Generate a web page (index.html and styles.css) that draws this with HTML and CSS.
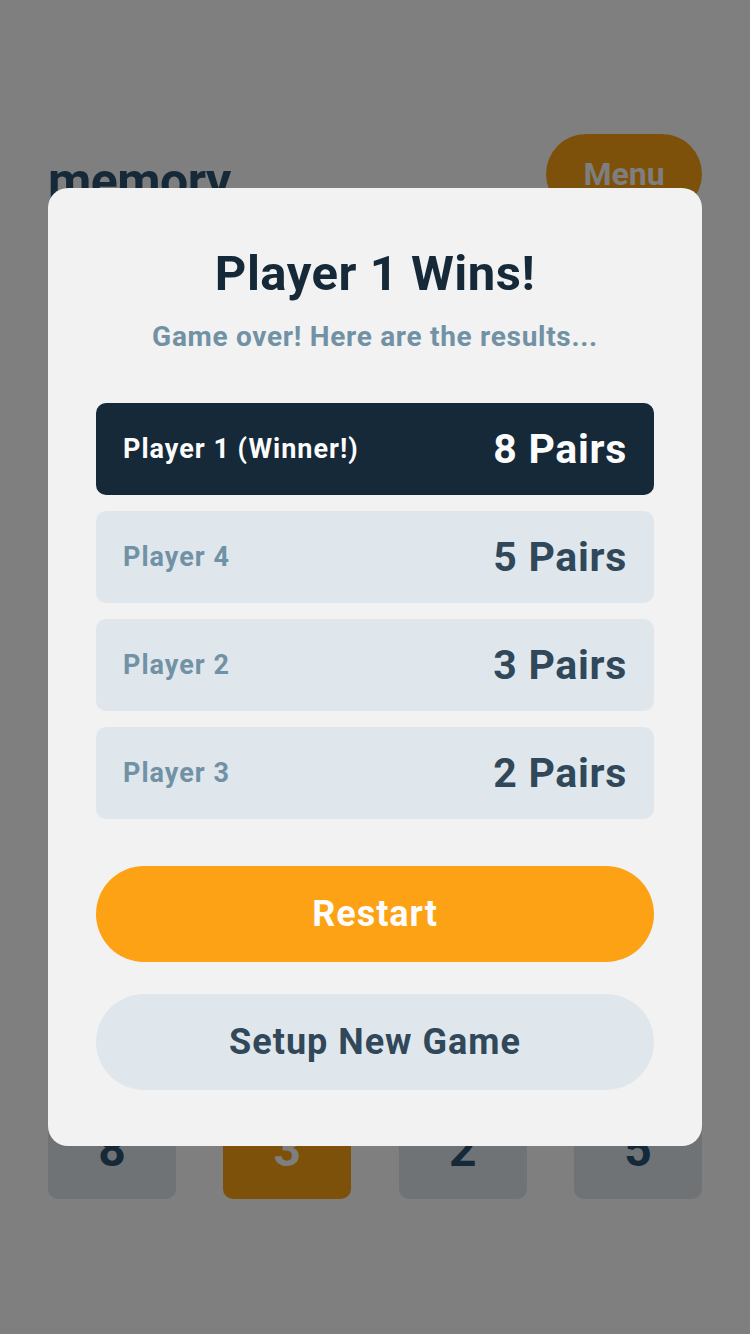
FILE: index.html
```html
<!DOCTYPE html>
<html lang="en">
<head>
<meta charset="utf-8">
<title>memory</title>
<link rel="stylesheet" href="styles.css">
</head>
<body>
<div class="page">
  <header class="header">
    <div class="logo">memory</div>
    <button class="menu-btn">Menu</button>
  </header>
  <main class="board"></main>
  <footer class="players">
    <div class="player"><span class="p-score">8</span></div>
    <div class="player active"><span class="p-score">3</span></div>
    <div class="player"><span class="p-score">2</span></div>
    <div class="player"><span class="p-score">5</span></div>
  </footer>
</div>

<div class="backdrop">
  <section class="modal">
    <h1 class="title">Player 1 Wins!</h1>
    <p class="subtitle">Game over! Here are the results...</p>
    <ul class="results">
      <li class="row winner"><span class="row-label">Player 1 (Winner!)</span><span class="row-value">8 Pairs</span></li>
      <li class="row"><span class="row-label">Player 4</span><span class="row-value">5 Pairs</span></li>
      <li class="row"><span class="row-label">Player 2</span><span class="row-value">3 Pairs</span></li>
      <li class="row"><span class="row-label">Player 3</span><span class="row-value">2 Pairs</span></li>
    </ul>
    <div class="actions">
      <button class="btn btn-primary">Restart</button>
      <button class="btn btn-secondary">Setup New Game</button>
    </div>
  </section>
</div>
</body>
</html>
```

FILE: styles.css
```css
* { box-sizing: border-box; }

html, body {
  margin: 0;
  padding: 0;
}

body {
  width: 750px;
  height: 1334px;
  overflow: hidden;
  background: #7f7f7f;
  font-family: Roboto, "Liberation Sans", sans-serif;
  font-weight: 700;
}

.page {
  min-height: 1334px;
  display: flex;
  flex-direction: column;
  padding: 134px 48px 135px;
}

.header {
  display: flex;
  align-items: center;
  justify-content: space-between;
  height: 80px;
}

.logo {
  font-size: 50px;
  line-height: 1;
  color: #152938;
  letter-spacing: -0.5px;
  padding-top: 14px;
}

.menu-btn {
  width: 156px;
  height: 80px;
  border: 0;
  border-radius: 40px;
  background: #7e510a;
  color: #7e7e7e;
  font-family: inherit;
  font-weight: 700;
  font-size: 32px;
}

.board {
  flex: 1;
}

.players {
  display: flex;
  justify-content: space-between;
}

.player {
  width: 128px;
  height: 140px;
  border-radius: 10px;
  background: #6f7376;
  display: flex;
  flex-direction: column;
  align-items: center;
  justify-content: flex-end;
  padding-bottom: 25px;
}

.player.active {
  background: #7e510a;
}

.p-score {
  font-size: 48px;
  line-height: 48px;
  color: #152938;
}

.player.active .p-score { color: #7e7e7e; }

.backdrop {
  position: fixed;
  inset: 0;
  display: flex;
  align-items: center;
  justify-content: center;
}

.modal {
  width: 654px;
  background: #f2f2f2;
  border-radius: 20px;
  padding: 58px 48px 56px;
  text-align: center;
}

.title {
  margin: 0;
  font-size: 49px;
  line-height: 56px;
  letter-spacing: 0.5px;
  color: #152938;
  font-weight: 700;
}

.subtitle {
  margin: 18px 0 0;
  font-size: 28px;
  line-height: 34px;
  letter-spacing: 0.7px;
  color: #7191a5;
}

.results {
  list-style: none;
  margin: 49px 0 0;
  padding: 0;
  display: flex;
  flex-direction: column;
  gap: 16px;
}

.row {
  height: 92px;
  border-radius: 10px;
  background: #dfe7ec;
  display: flex;
  align-items: center;
  justify-content: space-between;
  padding: 0 27px;
}

.row-label {
  font-size: 27px;
  letter-spacing: 1px;
  color: #7191a5;
}

.row-value {
  font-size: 41px;
  letter-spacing: 0.7px;
  color: #304859;
}

.row.winner { background: #152938; }
.row.winner .row-label,
.row.winner .row-value { color: #fcfcfc; }

.actions {
  margin-top: 47px;
  display: flex;
  flex-direction: column;
  gap: 32px;
}

.btn {
  height: 96px;
  border: 0;
  border-radius: 48px;
  font-family: inherit;
  font-weight: 700;
  font-size: 36px;
  letter-spacing: 1px;
}

.btn-primary {
  background: #fda214;
  color: #fcfcfc;
}

.btn-secondary {
  background: #dfe7ec;
  color: #304859;
}
```
